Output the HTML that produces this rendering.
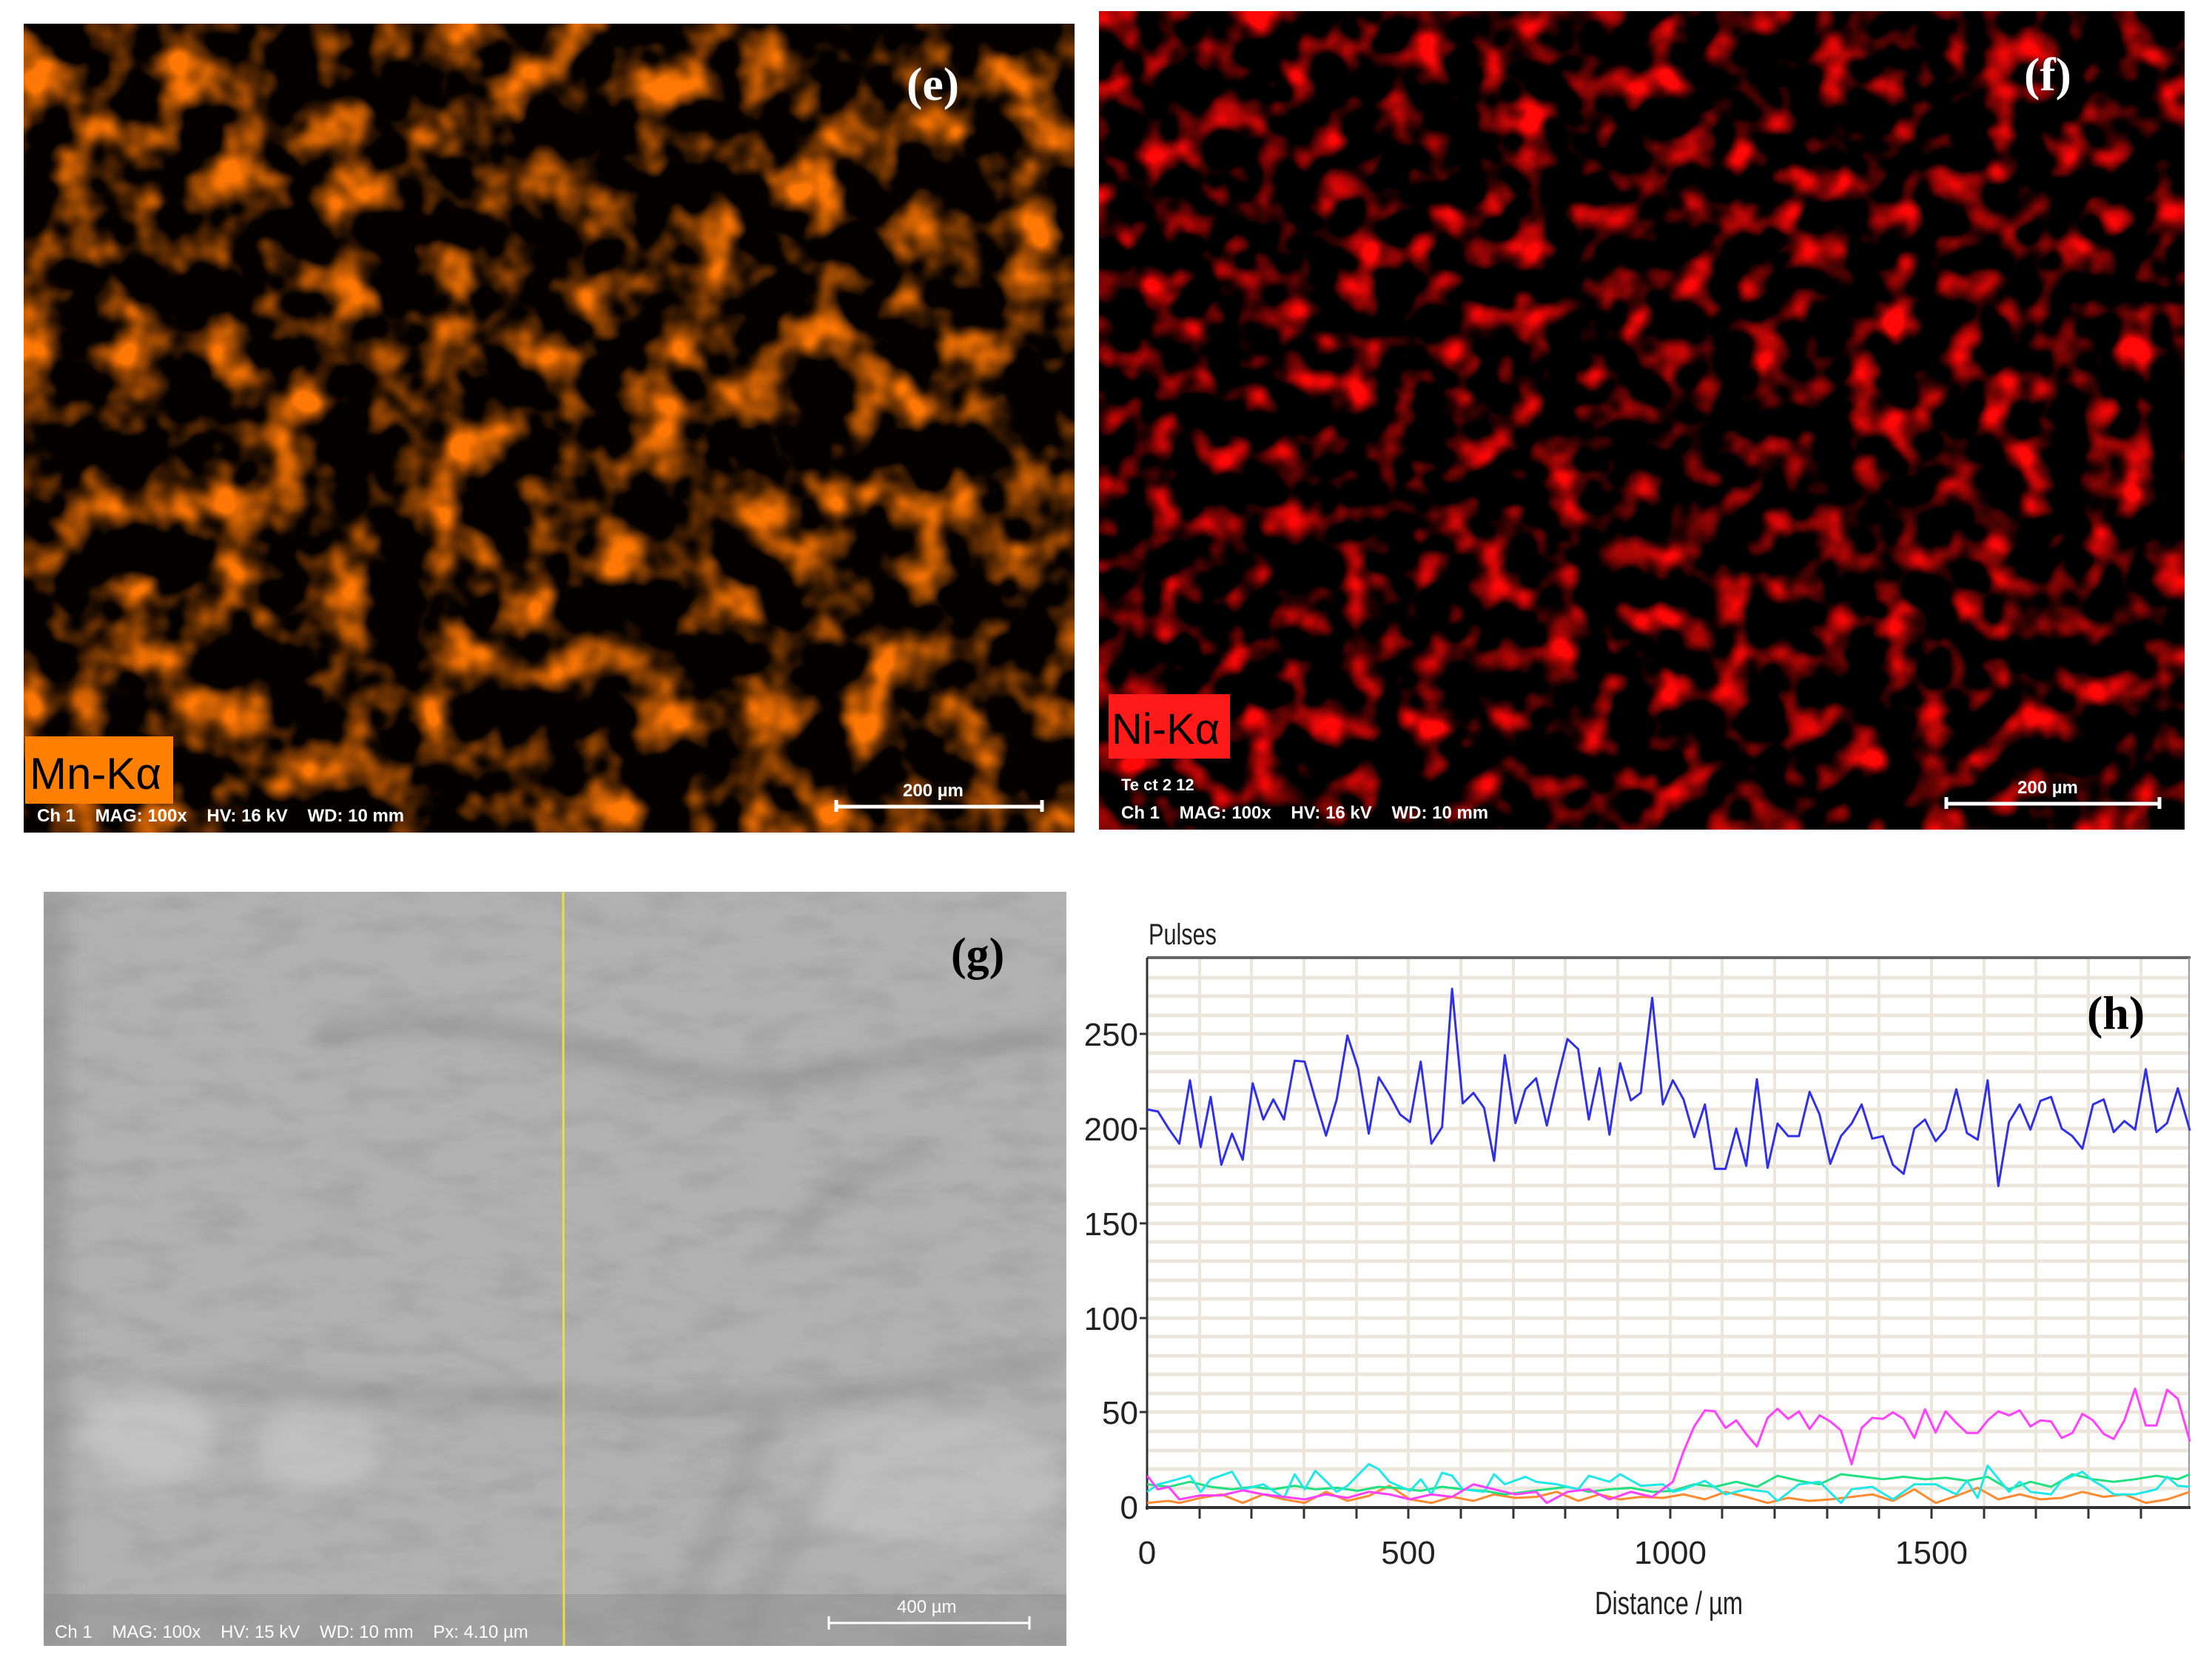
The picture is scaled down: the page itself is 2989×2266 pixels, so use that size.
<!DOCTYPE html>
<html><head><meta charset="utf-8"><style>
html,body{margin:0;padding:0;background:#fff;}
svg{display:block}
</style></head><body>
<svg width="2989" height="2266" viewBox="0 0 2989 2266" xmlns="http://www.w3.org/2000/svg">
<defs>
<filter id="fe" x="0" y="0" width="100%" height="100%" color-interpolation-filters="sRGB">
<feTurbulence type="fractalNoise" baseFrequency="0.014" numOctaves="3" seed="3" result="n"/>
<feGaussianBlur in="n" stdDeviation="4" result="b"/>
<feColorMatrix in="b" type="matrix" values="0 0 0 0 1  0 0 0 0 0.47  0 0 0 0 0.02  3.2 0 0 0 -1.45"/>
</filter>
<filter id="ff" x="0" y="0" width="100%" height="100%" color-interpolation-filters="sRGB">
<feTurbulence type="fractalNoise" baseFrequency="0.022" numOctaves="3" seed="11" result="n"/>
<feGaussianBlur in="n" stdDeviation="5" result="b"/>
<feColorMatrix in="b" type="matrix" values="0 0 0 0 1  0 0 0 0 0.03  0 0 0 0 0.03  3.6 0 0 0 -1.75"/>
</filter>
<filter id="fg" x="0" y="0" width="100%" height="100%">
<feTurbulence type="fractalNoise" baseFrequency="0.012 0.03" numOctaves="4" seed="5" result="n"/>
<feColorMatrix in="n" type="matrix" values="0 0 0 0 0.3  0 0 0 0 0.3  0 0 0 0 0.3  1.0 0 0 0 -0.42"/>
</filter>
<filter id="bl"><feGaussianBlur stdDeviation="14"/></filter>
<clipPath id="cg"><rect x="59" y="1205" width="1382" height="1019"/></clipPath>
</defs>

<!-- (e) -->
<rect x="32" y="32" width="1420" height="1093" fill="#050100"/>
<rect x="32" y="32" width="1420" height="1093" filter="url(#fe)"/>
<rect x="34" y="995" width="200" height="91" fill="#ff8000"/>
<text x="40" y="1066" font-family="Liberation Sans, sans-serif" font-size="60" fill="#000">Mn-Kα</text>
<text x="50" y="1110" font-family="Liberation Sans, sans-serif" font-size="24" font-weight="bold" fill="#fff" xml:space="preserve">Ch 1    MAG: 100x    HV: 16 kV    WD: 10 mm</text>
<text x="1220" y="1076" font-family="Liberation Sans, sans-serif" font-size="24" font-weight="bold" fill="#fff">200 µm</text>
<path d="M1130 1081v16M1408 1081v16M1130 1090H1408" stroke="#fff" stroke-width="5" fill="none"/>
<text x="1225" y="135" font-family="Liberation Serif, serif" font-size="64" font-weight="bold" fill="#fff">(e)</text>

<!-- (f) -->
<rect x="1485" y="15" width="1467" height="1106" fill="#000"/>
<rect x="1485" y="15" width="1467" height="1106" filter="url(#ff)"/>
<rect x="1498" y="938" width="164" height="87" fill="#ff1a1a"/>
<text x="1502" y="1005" font-family="Liberation Sans, sans-serif" font-size="58" fill="#000">Ni-Kα</text>
<text x="1515" y="1068" font-family="Liberation Sans, sans-serif" font-size="22" font-weight="bold" fill="#fff">Te ct 2 12</text>
<text x="1515" y="1106" font-family="Liberation Sans, sans-serif" font-size="24" font-weight="bold" fill="#fff" xml:space="preserve">Ch 1    MAG: 100x    HV: 16 kV    WD: 10 mm</text>
<text x="2726" y="1072" font-family="Liberation Sans, sans-serif" font-size="24" font-weight="bold" fill="#fff">200 µm</text>
<path d="M2630 1077v16M2918 1077v16M2630 1086H2918" stroke="#fff" stroke-width="5" fill="none"/>
<text x="2735" y="122" font-family="Liberation Serif, serif" font-size="64" font-weight="bold" fill="#fff">(f)</text>

<!-- (g) -->
<g clip-path="url(#cg)">
<rect x="59" y="1205" width="1382" height="1019" fill="#b2b2b2"/>
<rect x="59" y="1205" width="1382" height="1019" filter="url(#fg)"/>
<g filter="url(#bl)">
<rect x="40" y="1205" width="50" height="1019" fill="#777" opacity="0.35"/>
<path d="M430 1400 Q600 1360 800 1420 T1120 1450 T1441 1395" stroke="#7c7c7c" stroke-width="22" fill="none" opacity="0.5"/>
<path d="M150 1870 Q500 1880 800 1895 T1441 1830" stroke="#707070" stroke-width="16" fill="none" opacity="0.45"/>
<path d="M1050 1690 Q1130 1580 1250 1560" stroke="#777" stroke-width="20" fill="none" opacity="0.4"/>
<ellipse cx="200" cy="1940" rx="90" ry="70" fill="#d8d8d8" opacity="0.45"/>
<ellipse cx="430" cy="1960" rx="80" ry="60" fill="#d8d8d8" opacity="0.4"/>
<ellipse cx="1250" cy="2000" rx="190" ry="90" fill="#d4d4d4" opacity="0.35"/>
<path d="M900 2224 L1040 1900 M1000 2224 L1120 1960" stroke="#888" stroke-width="40" opacity="0.3"/>
</g>
<rect x="59" y="2154" width="1382" height="70" fill="#8a8a8a" opacity="0.45"/>
</g>
<line x1="761" y1="1205" x2="762" y2="2224" stroke="#e8e040" stroke-width="3"/>
<text x="74" y="2213" font-family="Liberation Sans, sans-serif" font-size="24" fill="#fff" xml:space="preserve">Ch 1    MAG: 100x    HV: 15 kV    WD: 10 mm    Px: 4.10 µm</text>
<text x="1212" y="2179" font-family="Liberation Sans, sans-serif" font-size="24" fill="#fff">400 µm</text>
<path d="M1120 2184v18M1391 2184v18M1120 2193H1391" stroke="#fff" stroke-width="3" fill="none"/>
<text x="1285" y="1310" font-family="Liberation Serif, serif" font-size="62" font-weight="bold" fill="#000">(g)</text>

<!-- (h) chart -->
<rect x="1550" y="1296" width="1408" height="740" fill="#fff"/>
<g stroke="#ece6dc" stroke-width="5">
<line x1="1550" y1="1321" x2="2958" y2="1321"/><line x1="1550" y1="1346" x2="2958" y2="1346"/><line x1="1550" y1="1372" x2="2958" y2="1372"/><line x1="1550" y1="1397" x2="2958" y2="1397"/><line x1="1550" y1="1423" x2="2958" y2="1423"/><line x1="1550" y1="1448" x2="2958" y2="1448"/><line x1="1550" y1="1474" x2="2958" y2="1474"/><line x1="1550" y1="1499" x2="2958" y2="1499"/><line x1="1550" y1="1525" x2="2958" y2="1525"/><line x1="1550" y1="1551" x2="2958" y2="1551"/><line x1="1550" y1="1576" x2="2958" y2="1576"/><line x1="1550" y1="1602" x2="2958" y2="1602"/><line x1="1550" y1="1627" x2="2958" y2="1627"/><line x1="1550" y1="1653" x2="2958" y2="1653"/><line x1="1550" y1="1678" x2="2958" y2="1678"/><line x1="1550" y1="1704" x2="2958" y2="1704"/><line x1="1550" y1="1730" x2="2958" y2="1730"/><line x1="1550" y1="1755" x2="2958" y2="1755"/><line x1="1550" y1="1781" x2="2958" y2="1781"/><line x1="1550" y1="1806" x2="2958" y2="1806"/><line x1="1550" y1="1832" x2="2958" y2="1832"/><line x1="1550" y1="1857" x2="2958" y2="1857"/><line x1="1550" y1="1883" x2="2958" y2="1883"/><line x1="1550" y1="1908" x2="2958" y2="1908"/><line x1="1550" y1="1934" x2="2958" y2="1934"/><line x1="1550" y1="1960" x2="2958" y2="1960"/><line x1="1550" y1="1985" x2="2958" y2="1985"/><line x1="1550" y1="2011" x2="2958" y2="2011"/>
</g>
<g stroke="#ece6dc" stroke-width="4">
<line x1="1621" y1="1296" x2="1621" y2="2036"/><line x1="1691" y1="1296" x2="1691" y2="2036"/><line x1="1762" y1="1296" x2="1762" y2="2036"/><line x1="1833" y1="1296" x2="1833" y2="2036"/><line x1="1903" y1="1296" x2="1903" y2="2036"/><line x1="1974" y1="1296" x2="1974" y2="2036"/><line x1="2045" y1="1296" x2="2045" y2="2036"/><line x1="2115" y1="1296" x2="2115" y2="2036"/><line x1="2186" y1="1296" x2="2186" y2="2036"/><line x1="2257" y1="1296" x2="2257" y2="2036"/><line x1="2327" y1="1296" x2="2327" y2="2036"/><line x1="2398" y1="1296" x2="2398" y2="2036"/><line x1="2469" y1="1296" x2="2469" y2="2036"/><line x1="2539" y1="1296" x2="2539" y2="2036"/><line x1="2610" y1="1296" x2="2610" y2="2036"/><line x1="2681" y1="1296" x2="2681" y2="2036"/><line x1="2751" y1="1296" x2="2751" y2="2036"/><line x1="2822" y1="1296" x2="2822" y2="2036"/><line x1="2893" y1="1296" x2="2893" y2="2036"/>
</g>
<line x1="1550" y1="1294" x2="2960" y2="1294" stroke="#666" stroke-width="4"/>
<line x1="2958" y1="1294" x2="2958" y2="2036" stroke="#999" stroke-width="2"/>
<line x1="1550" y1="1294" x2="1550" y2="2040" stroke="#333" stroke-width="3"/>
<line x1="1548" y1="2037" x2="2960" y2="2037" stroke="#333" stroke-width="4"/>
<g stroke="#333" stroke-width="3">
<line x1="1540" y1="1397" x2="1550" y2="1397"/><line x1="1540" y1="1525" x2="1550" y2="1525"/><line x1="1540" y1="1653" x2="1550" y2="1653"/><line x1="1540" y1="1781" x2="1550" y2="1781"/><line x1="1540" y1="1908" x2="1550" y2="1908"/>
<line x1="1621" y1="2037" x2="1621" y2="2052"/><line x1="1691" y1="2037" x2="1691" y2="2052"/><line x1="1762" y1="2037" x2="1762" y2="2052"/><line x1="1833" y1="2037" x2="1833" y2="2052"/><line x1="1903" y1="2037" x2="1903" y2="2052"/><line x1="1974" y1="2037" x2="1974" y2="2052"/><line x1="2045" y1="2037" x2="2045" y2="2052"/><line x1="2115" y1="2037" x2="2115" y2="2052"/><line x1="2186" y1="2037" x2="2186" y2="2052"/><line x1="2257" y1="2037" x2="2257" y2="2052"/><line x1="2327" y1="2037" x2="2327" y2="2052"/><line x1="2398" y1="2037" x2="2398" y2="2052"/><line x1="2469" y1="2037" x2="2469" y2="2052"/><line x1="2539" y1="2037" x2="2539" y2="2052"/><line x1="2610" y1="2037" x2="2610" y2="2052"/><line x1="2681" y1="2037" x2="2681" y2="2052"/><line x1="2751" y1="2037" x2="2751" y2="2052"/><line x1="2822" y1="2037" x2="2822" y2="2052"/><line x1="2893" y1="2037" x2="2893" y2="2052"/>
</g>
<svg x="1480" y="1200" width="1509" height="1066" viewBox="0 0 1568 1568" preserveAspectRatio="none" overflow="visible">
<g fill="none" stroke-width="3" stroke-linejoin="round">
<polyline vector-effect="non-scaling-stroke" stroke="#ff8a30" points="73,1222 103,1218 118,1222 148,1212 177,1205 207,1222 236,1205 265,1215 294,1222 324,1200 354,1218 384,1208 413,1188 442,1215 472,1222 501,1210 531,1218 560,1205 590,1212 619,1210 648,1200 678,1218 708,1205 737,1215 766,1210 797,1212 826,1205 856,1215 885,1200 914,1210 944,1222 973,1212 1003,1218 1032,1215 1062,1210 1091,1205 1120,1218 1150,1195 1180,1222 1209,1208 1239,1192 1268,1215 1298,1205 1327,1215 1357,1212 1386,1200 1416,1210 1445,1205 1475,1222 1505,1215 1537,1200"/>
<polyline vector-effect="non-scaling-stroke" stroke="#22e080" points="73,1185 103,1190 133,1180 162,1190 192,1195 221,1190 250,1195 280,1188 309,1195 339,1192 369,1198 398,1190 428,1193 457,1198 487,1190 516,1195 546,1198 575,1205 604,1200 634,1195 663,1190 693,1200 722,1195 752,1192 782,1200 811,1198 841,1185 870,1190 900,1180 929,1190 958,1168 988,1178 1017,1185 1047,1165 1076,1170 1106,1175 1135,1170 1165,1175 1194,1172 1224,1178 1253,1170 1283,1195 1313,1180 1342,1190 1372,1165 1401,1175 1430,1180 1460,1175 1490,1168 1520,1175 1537,1165"/>
<polyline vector-effect="non-scaling-stroke" stroke="#20e8e8" points="73,1200 88,1185 103,1180 133,1168 148,1200 162,1175 192,1160 207,1195 236,1185 265,1212 280,1165 294,1195 309,1158 339,1200 354,1188 384,1145 398,1155 413,1180 442,1198 457,1175 472,1205 487,1162 501,1168 516,1195 546,1200 560,1165 575,1185 604,1170 619,1180 648,1185 678,1195 693,1168 722,1180 737,1165 766,1188 797,1185 811,1200 826,1195 856,1178 885,1205 914,1195 944,1200 958,1218 988,1185 1017,1180 1047,1222 1062,1195 1091,1190 1120,1215 1150,1185 1180,1185 1209,1205 1224,1178 1239,1212 1253,1148 1283,1200 1298,1180 1313,1200 1342,1205 1357,1178 1386,1160 1401,1178 1416,1190 1430,1205 1460,1205 1490,1195 1505,1170 1520,1188 1537,1190"/>
<polyline vector-effect="non-scaling-stroke" stroke="#ff40ff" points="73,1168 88,1195 103,1190 118,1215 148,1207 177,1207 207,1197 236,1205 265,1210 294,1215 324,1205 354,1212 384,1200 413,1205 442,1215 472,1205 501,1210 531,1185 560,1195 590,1205 619,1200 634,1222 663,1200 693,1195 722,1215 752,1200 782,1210 811,1180 826,1120 841,1070 856,1038 870,1040 885,1073 900,1058 914,1085 929,1110 944,1053 958,1035 973,1055 988,1040 1003,1075 1017,1048 1032,1060 1047,1078 1062,1145 1076,1073 1091,1053 1106,1055 1120,1042 1135,1055 1150,1093 1165,1036 1180,1082 1194,1040 1209,1063 1224,1083 1239,1083 1253,1058 1268,1040 1283,1048 1298,1038 1313,1070 1327,1058 1342,1060 1357,1093 1372,1083 1386,1045 1401,1058 1416,1085 1430,1095 1445,1058 1460,995 1475,1068 1490,1068 1505,997 1520,1015 1537,1100"/>
<polyline vector-effect="non-scaling-stroke" stroke="#3030e8" points="73,440 88,444 103,478 118,508 133,382 148,515 162,415 177,550 192,488 207,540 221,388 236,460 250,420 265,460 280,343 294,345 309,420 324,492 339,420 354,293 369,358 384,488 398,376 413,410 428,450 442,465 457,345 472,508 487,475 501,200 516,428 531,407 546,437 560,542 575,332 590,467 604,400 619,378 634,472 648,385 663,300 678,320 693,460 708,358 722,490 737,348 752,422 766,407 782,218 797,430 811,382 826,420 841,495 856,430 870,558 885,558 900,478 914,552 929,380 944,556 958,468 973,493 988,493 1003,405 1017,450 1032,548 1047,493 1062,468 1076,430 1091,498 1106,493 1120,550 1135,568 1150,478 1165,460 1180,503 1194,480 1209,400 1224,487 1239,500 1253,382 1268,592 1283,465 1298,430 1313,480 1327,423 1342,415 1357,478 1372,493 1386,518 1401,430 1416,420 1430,485 1445,463 1460,480 1475,360 1490,485 1505,467 1520,398 1537,482"/>
</g>
</svg>
<g font-family="Liberation Sans, sans-serif" font-size="44" fill="#222" text-anchor="end">
<text x="1538" y="1413">250</text>
<text x="1538" y="1541">200</text>
<text x="1538" y="1669">150</text>
<text x="1538" y="1797">100</text>
<text x="1538" y="1924">50</text>
<text x="1538" y="2052">0</text>
</g>
<g font-family="Liberation Sans, sans-serif" font-size="44" fill="#222" text-anchor="middle">
<text x="1550" y="2113">0</text>
<text x="1903" y="2113">500</text>
<text x="2257" y="2113">1000</text>
<text x="2610" y="2113">1500</text>
<text x="2255" y="2181" textLength="200" lengthAdjust="spacingAndGlyphs">Distance / µm</text>
</g>
<text x="1552" y="1276" font-family="Liberation Sans, sans-serif" font-size="40" fill="#222" textLength="92" lengthAdjust="spacingAndGlyphs">Pulses</text>
<text x="2820" y="1390" font-family="Liberation Serif, serif" font-size="64" font-weight="bold" fill="#000">(h)</text>
</svg>
</body></html>
